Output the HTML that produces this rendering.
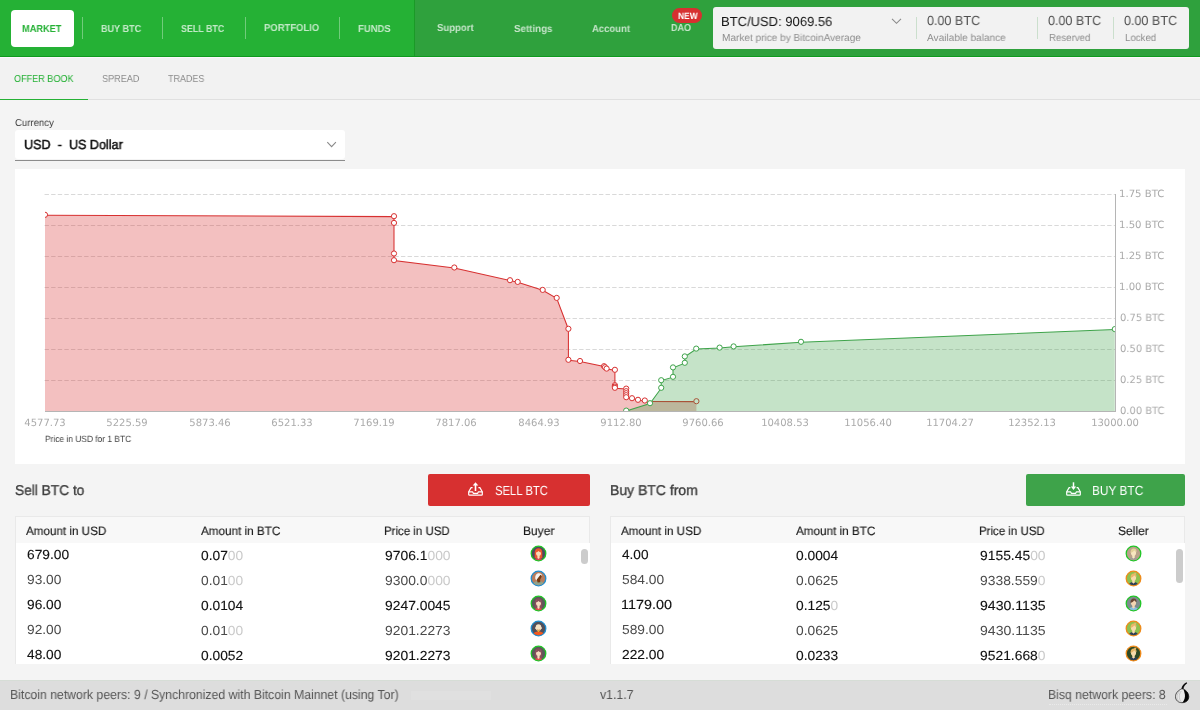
<!DOCTYPE html>
<html lang="en">
<head>
<meta charset="utf-8">
<title>Bisq - Market Offer Book</title>
<style>
*{box-sizing:border-box;margin:0;padding:0}
html,body{width:1200px;height:710px;overflow:hidden}
body{background:#f4f4f4;font-family:"Liberation Sans",sans-serif;position:relative}
.abs,.t,.chart{position:absolute}
.t{white-space:nowrap;line-height:1;z-index:5;transform-origin:0 50%;will-change:transform;text-rendering:geometricPrecision}
.chart{left:0;top:0;z-index:2}
#nav{left:0;top:0;width:1200px;height:57px;background:#2fa13d;border-bottom:1px solid #0f9a1e}
#nav1{left:0;top:0;width:415px;height:56px;background:#25b135;border-right:1px solid #1a9a27}
#navline{left:0;top:57px;width:1200px;height:1px;background:#fcf8fc}
#mk{left:11px;top:10px;width:63px;height:37px;background:#fff;border-radius:4px}
.sep{width:1px;top:17px;height:22px;background:rgba(255,255,255,0.35)}
#badge{left:672px;top:8px;width:30px;height:15px;border-radius:8px;background:#d73030}
#pbox{left:713px;top:7px;width:476px;height:42px;background:#f2f2f2;border-radius:3px}
.psep{width:1px;top:17px;height:22px;background:#cbdfcd}
#tabbar{left:0;top:58px;width:1200px;height:41px;background:#f2f2f2}
#tabline{left:0;top:99px;width:1200px;height:1px;background:#e0e0e0}
#tabsel{left:0;top:99px;width:88px;height:1px;background:#25b135}
#combo{left:15px;top:130px;width:330px;height:29px;background:#fff;border-radius:3px}
#comboline{left:15px;top:160px;width:330px;height:1px;background:#8c8c8c}
#panel{left:15px;top:169px;width:1170px;height:295px;background:#fff}
.btn{top:474px;height:32px;border-radius:2px}
#sell{left:428px;width:162px;background:#d73030}
#buy{left:1026px;width:159px;background:#3ea34a}
.tbl{top:516px;height:148px;border:1px solid #e9e9e9;background:#f8f8f8}
.rows{top:543px;height:121px;background:#fff}
.av,.ic{z-index:6}
.thumb{width:7px;border-radius:3.5px;background:#cccccc;z-index:6}
#foot{left:0;top:680px;width:1200px;height:30px;background:#dddddd}
</style>
</head>
<body>
<div id="nav" class="abs"></div>
<div id="nav1" class="abs"></div>
<div id="navline" class="abs"></div>
<div id="mk" class="abs"></div>
<div class="abs sep" style="left:82px"></div>
<div class="abs sep" style="left:162px"></div>
<div class="abs sep" style="left:245px"></div>
<div class="abs sep" style="left:339px"></div>
<div id="badge" class="abs"></div>
<div id="pbox" class="abs"></div>
<div class="abs psep" style="left:916px"></div>
<div class="abs psep" style="left:1037px"></div>
<div class="abs psep" style="left:1113px"></div>
<svg class="abs" style="left:891px;top:17px;z-index:6" width="12" height="8" viewBox="0 0 12 8"><path d="M1 1.800 L5.500 6.300 L10 1.800" fill="none" stroke="#8a8a8a" stroke-width="1.100"/></svg>
<div id="tabbar" class="abs"></div>
<div id="tabline" class="abs"></div>
<div id="tabsel" class="abs"></div>
<div id="combo" class="abs"></div>
<div id="comboline" class="abs"></div>
<svg class="abs" style="left:326px;top:140px;z-index:6" width="12" height="9" viewBox="0 0 12 9"><path d="M1.300 2.200 L5.600 6.700 L9.900 2.200" fill="none" stroke="#8a8a8a" stroke-width="1.100"/></svg>
<div id="panel" class="abs"></div>
<svg class="chart" width="1200" height="710" viewBox="0 0 1200 710">
<defs><clipPath id="plot"><rect x="45" y="185" width="1070.5" height="227"/></clipPath></defs>
<line x1="44.55" y1="194.5" x2="1115" y2="194.5" stroke="#d9d9d9" stroke-width="1" stroke-dasharray="4.4 2.2"/>
<line x1="44.55" y1="225.5" x2="1115" y2="225.5" stroke="#d9d9d9" stroke-width="1" stroke-dasharray="4.4 2.2"/>
<line x1="44.55" y1="256.5" x2="1115" y2="256.5" stroke="#d9d9d9" stroke-width="1" stroke-dasharray="4.4 2.2"/>
<line x1="44.55" y1="287.5" x2="1115" y2="287.5" stroke="#d9d9d9" stroke-width="1" stroke-dasharray="4.4 2.2"/>
<line x1="44.55" y1="318.5" x2="1115" y2="318.5" stroke="#d9d9d9" stroke-width="1" stroke-dasharray="4.4 2.2"/>
<line x1="44.55" y1="349.5" x2="1115" y2="349.5" stroke="#d9d9d9" stroke-width="1" stroke-dasharray="4.4 2.2"/>
<line x1="44.55" y1="380.5" x2="1115" y2="380.5" stroke="#d9d9d9" stroke-width="1" stroke-dasharray="4.4 2.2"/>
<g clip-path="url(#plot)">
<polygon points="45.0,215.2 394.0,216.6 394.0,223.3 394.0,253.9 394.0,260.6 454.3,267.9 510.0,280.6 517.7,282.3 542.7,290.3 556.7,298.3 568.4,329.2 568.4,360.2 580.0,361.4 604.0,366.6 605.0,367.6 606.6,369.0 614.9,370.2 614.9,385.6 614.9,387.0 614.9,388.2 626.2,389.0 626.2,391.6 626.2,393.6 626.2,395.6 626.2,397.6 632.0,398.6 638.0,400.2 644.8,400.9 650.0,401.5 696.4,401.6 696.4,411.3 45.0,411.3" fill="rgba(215,48,48,0.3)"/>
<polyline points="45.0,215.2 394.0,216.6 394.0,223.3 394.0,253.9 394.0,260.6 454.3,267.9 510.0,280.6 517.7,282.3 542.7,290.3 556.7,298.3 568.4,329.2 568.4,360.2 580.0,361.4 604.0,366.6 605.0,367.6 606.6,369.0 614.9,370.2 614.9,385.6 614.9,387.0 614.9,388.2 626.2,389.0 626.2,391.6 626.2,393.6 626.2,395.6 626.2,397.6 632.0,398.6 638.0,400.2 644.8,400.9 650.0,401.5 696.4,401.6" fill="none" stroke="#d73030" stroke-width="1.05"/>
<g fill="#fff" stroke="#d73030" stroke-width="1">
<circle cx="45.0" cy="214.8" r="2.6"/>
<circle cx="394.0" cy="216.2" r="2.6"/>
<circle cx="394.0" cy="222.9" r="2.6"/>
<circle cx="394.0" cy="253.5" r="2.6"/>
<circle cx="394.0" cy="260.2" r="2.6"/>
<circle cx="454.3" cy="267.5" r="2.6"/>
<circle cx="510.0" cy="280.2" r="2.6"/>
<circle cx="517.7" cy="281.9" r="2.6"/>
<circle cx="542.7" cy="289.9" r="2.6"/>
<circle cx="556.7" cy="297.9" r="2.6"/>
<circle cx="568.4" cy="328.8" r="2.6"/>
<circle cx="568.4" cy="359.8" r="2.6"/>
<circle cx="580.0" cy="361.0" r="2.6"/>
<circle cx="604.0" cy="366.2" r="2.6"/>
<circle cx="605.0" cy="367.2" r="2.6"/>
<circle cx="606.6" cy="368.6" r="2.6"/>
<circle cx="614.9" cy="369.8" r="2.6"/>
<circle cx="614.9" cy="385.2" r="2.6"/>
<circle cx="614.9" cy="386.6" r="2.6"/>
<circle cx="614.9" cy="387.8" r="2.6"/>
<circle cx="626.2" cy="388.6" r="2.6"/>
<circle cx="626.2" cy="391.2" r="2.6"/>
<circle cx="626.2" cy="393.2" r="2.6"/>
<circle cx="626.2" cy="395.2" r="2.6"/>
<circle cx="626.2" cy="397.2" r="2.6"/>
<circle cx="632.0" cy="398.2" r="2.6"/>
<circle cx="638.0" cy="399.8" r="2.6"/>
<circle cx="644.8" cy="400.5" r="2.6"/>
<circle cx="696.4" cy="401.2" r="2.6"/>
</g>
<polygon points="626.2,411.0 650.0,403.6 661.2,388.2 661.2,380.6 673.0,377.2 673.0,367.8 684.8,363.2 684.8,356.8 696.2,349.0 719.6,348.0 733.6,346.8 801.0,342.2 1114.8,329.5 1114.8,411.3 626.2,411.3" fill="rgba(62,163,74,0.3)"/>
<polyline points="626.2,411.0 650.0,403.6 661.2,388.2 661.2,380.6 673.0,377.2 673.0,367.8 684.8,363.2 684.8,356.8 696.2,349.0 719.6,348.0 733.6,346.8 801.0,342.2 1114.8,329.5" fill="none" stroke="#3ea34a" stroke-width="1.05"/>
<g fill="#fff" stroke="#3ea34a" stroke-width="1">
<circle cx="626.2" cy="410.6" r="2.6"/>
<circle cx="650.0" cy="403.2" r="2.6"/>
<circle cx="661.2" cy="387.8" r="2.6"/>
<circle cx="661.2" cy="380.2" r="2.6"/>
<circle cx="673.0" cy="376.8" r="2.6"/>
<circle cx="673.0" cy="367.4" r="2.6"/>
<circle cx="684.8" cy="362.8" r="2.6"/>
<circle cx="684.8" cy="356.4" r="2.6"/>
<circle cx="696.2" cy="348.6" r="2.6"/>
<circle cx="719.6" cy="347.6" r="2.6"/>
<circle cx="733.6" cy="346.4" r="2.6"/>
<circle cx="801.0" cy="341.8" r="2.6"/>
<circle cx="1114.8" cy="329.1" r="2.6"/>
</g></g>
<line x1="45" y1="411.5" x2="1116" y2="411.5" stroke="#b5b5b5" stroke-width="1"/>
<line x1="1115.5" y1="194" x2="1115.5" y2="412" stroke="#b5b5b5" stroke-width="1"/>
</svg>
<div id="sell" class="abs btn"></div>
<div id="buy" class="abs btn"></div>
<div class="abs tbl" style="left:15px;width:575px"></div>
<div class="abs rows" style="left:16px;width:574px"></div>
<div class="abs tbl" style="left:610px;width:575px"></div>
<div class="abs rows" style="left:611px;width:574px"></div>
<div class="abs thumb" style="left:581px;top:549px;height:15px;width:7px"></div>
<div class="abs thumb" style="left:1176px;top:549px;height:34px;width:7px"></div>
<div id="foot" class="abs"></div>
<svg class="abs av" style="left:530.4px;top:545.4px" width="17" height="17" viewBox="-0.5 -0.5 17 17"><defs><clipPath id="c538_553"><circle cx="8" cy="8" r="6.8"/></clipPath></defs><circle cx="8" cy="8" r="7.3" fill="#4e4960" stroke="#20c626" stroke-width="1.3"/><g clip-path="url(#c538_553)"><path d="M4.200 12.600V7.100C4.200 4.100 5.700 2.700 8 2.700s3.800 1.400 3.800 4.400v5.500z" fill="#ea552c"/><path d="M3.700 16c0-2.400 1.500-3.800 4.300-3.800s4.300 1.400 4.300 3.800z" fill="#d9464f"/><path d="M6.900 9.800h2.200v2.700L8 13.500l-1.100-1z" fill="#f8dcb8"/><ellipse cx="8" cy="7.500" rx="2.500" ry="3" fill="#f8dcb8"/><path d="M5.400 6.900C5.500 4.600 6.600 3.700 8 3.700s2.500.9 2.600 3.200C9.600 6.700 8.700 6.100 8 5.400 7.300 6.100 6.400 6.700 5.400 6.900z" fill="#ea552c"/></g></svg>
<svg class="abs av" style="left:530.4px;top:570.4px" width="17" height="17" viewBox="-0.5 -0.5 17 17"><defs><clipPath id="c538_578"><circle cx="8" cy="8" r="6.8"/></clipPath></defs><circle cx="8" cy="8" r="7.3" fill="#b87d5d" stroke="#1d8dd0" stroke-width="1.3"/><g clip-path="url(#c538_578)"><path d="M2 16c0-3.600 2.100-5.400 6-5.400s6 1.800 6 5.400z" fill="#90a28c"/><path d="M4.900 8.800C4.200 5 5.800 2.700 8.400 2.700c2.200 0 3.300 1.300 3 2.900L7 10.300z" fill="#f6f3f0"/><path d="M6.300 9L10 4.300l1.500 1.300-1.900 3.600.2 2.600-2.700.2z" fill="#74390f"/></g></svg>
<svg class="abs av" style="left:530.4px;top:595.4px" width="17" height="17" viewBox="-0.5 -0.5 17 17"><defs><clipPath id="c538_603"><circle cx="8" cy="8" r="6.8"/></clipPath></defs><circle cx="8" cy="8" r="7.3" fill="#5a595b" stroke="#20c626" stroke-width="1.3"/><g clip-path="url(#c538_603)"><path d="M4.200 12.600V7.100C4.200 4.100 5.700 2.700 8 2.700s3.800 1.400 3.800 4.400v5.500z" fill="#87505a"/><path d="M3.700 16c0-2.400 1.500-3.800 4.300-3.800s4.300 1.400 4.300 3.800z" fill="#e44b4b"/><path d="M6.900 9.800h2.200v2.700L8 13.500l-1.100-1z" fill="#f6dcc0"/><ellipse cx="8" cy="7.500" rx="2.500" ry="3" fill="#f6dcc0"/><path d="M5.400 6.900C5.500 4.600 6.600 3.700 8 3.700s2.500.9 2.600 3.200C9.600 6.700 8.700 6.100 8 5.400 7.300 6.100 6.400 6.700 5.400 6.900z" fill="#87505a"/></g></svg>
<svg class="abs av" style="left:530.4px;top:620.4px" width="17" height="17" viewBox="-0.5 -0.5 17 17"><defs><clipPath id="c538_628"><circle cx="8" cy="8" r="6.8"/></clipPath></defs><circle cx="8" cy="8" r="7.3" fill="#524f5a" stroke="#1d8dd0" stroke-width="1.3"/><g clip-path="url(#c538_628)"><path d="M2.400 16c0-3.300 1.900-4.900 5.600-4.900s5.600 1.600 5.600 4.900z" fill="#f4581f"/><ellipse cx="8" cy="7" rx="2.800" ry="3.300" fill="#f6e2c4"/><circle cx="5.300" cy="7.600" r=".8" fill="#f6e2c4"/><circle cx="10.700" cy="7.600" r=".8" fill="#f6e2c4"/><path d="M6.200 8.600c.3 1.900 1 2.800 1.800 2.800s1.500-.9 1.800-2.800c-.6.500-1.200.7-1.800.7s-1.200-.2-1.800-.7z" fill="#d9a05a"/><circle cx="8" cy="10.600" r=".7" fill="#f2c21a"/></g></svg>
<svg class="abs av" style="left:530.4px;top:645.4px" width="17" height="17" viewBox="-0.5 -0.5 17 17"><defs><clipPath id="c538_653"><circle cx="8" cy="8" r="6.8"/></clipPath></defs><circle cx="8" cy="8" r="7.3" fill="#5a595b" stroke="#20c626" stroke-width="1.3"/><g clip-path="url(#c538_653)"><path d="M4.200 12.600V7.100C4.200 4.100 5.700 2.700 8 2.700s3.800 1.400 3.800 4.400v5.500z" fill="#87505a"/><path d="M3.700 16c0-2.400 1.500-3.800 4.300-3.800s4.300 1.400 4.300 3.800z" fill="#e44b4b"/><path d="M6.900 9.800h2.200v2.700L8 13.500l-1.100-1z" fill="#f6dcc0"/><ellipse cx="8" cy="7.500" rx="2.500" ry="3" fill="#f6dcc0"/><path d="M5.400 6.900C5.500 4.600 6.600 3.700 8 3.700s2.500.9 2.600 3.200C9.600 6.700 8.700 6.100 8 5.400 7.300 6.100 6.400 6.700 5.400 6.900z" fill="#87505a"/></g></svg>
<svg class="abs av" style="left:1125.3px;top:545.4px" width="17" height="17" viewBox="-0.5 -0.5 17 17"><defs><clipPath id="c1133_553"><circle cx="8" cy="8" r="6.800"/></clipPath></defs><circle cx="8" cy="8" r="7.300" fill="#b9a18a" stroke="#20c626" stroke-width="1.300"/><g clip-path="url(#c1133_553)"><path d="M3.100 16c0-3 1.700-4.600 4.900-4.600s4.900 1.600 4.900 4.600z" fill="#a59d95"/><path d="M6.800 9.500h2.400v2.300L8 13.300 6.800 11.800z" fill="#f8e6c0"/><ellipse cx="8" cy="7.300" rx="2.600" ry="3.100" fill="#f8e6c0"/><path d="M5.100 7.400C4.800 4.400 6.100 2.900 8.200 2.900c2.100 0 3.100 1.500 2.800 3.900C10 6.300 9.100 5.600 8.700 4.800 7.900 6.100 6.600 7 5.100 7.400z" fill="#e4d29a"/></g></svg>
<svg class="abs av" style="left:1125.3px;top:570.4px" width="17" height="17" viewBox="-0.5 -0.5 17 17"><defs><clipPath id="c1133_578"><circle cx="8" cy="8" r="6.800"/></clipPath></defs><circle cx="8" cy="8" r="7.300" fill="#8dc150" stroke="#f08a1a" stroke-width="1.300"/><g clip-path="url(#c1133_578)"><path d="M3.100 16c0-3 1.700-4.600 4.900-4.600s4.900 1.600 4.900 4.600z" fill="#2e3f57"/><path d="M6.800 9.500h2.400v2.300L8 13.300 6.800 11.800z" fill="#f7dbab"/><ellipse cx="8" cy="7.300" rx="2.600" ry="3.100" fill="#f7dbab"/><path d="M5.100 7.400C4.800 4.400 6.100 2.900 8.200 2.900c2.100 0 3.100 1.500 2.800 3.900C10 6.300 9.100 5.600 8.700 4.800 7.900 6.100 6.600 7 5.100 7.400z" fill="#e7b768"/><circle cx="9.700" cy="3" r="1.100" fill="#e7b768"/></g></svg>
<svg class="abs av" style="left:1125.3px;top:595.4px" width="17" height="17" viewBox="-0.5 -0.5 17 17"><defs><clipPath id="c1133_603"><circle cx="8" cy="8" r="6.800"/></clipPath></defs><circle cx="8" cy="8" r="7.300" fill="#7e8b8d" stroke="#20c626" stroke-width="1.300"/><g clip-path="url(#c1133_603)"><path d="M3.100 16c0-3 1.700-4.600 4.900-4.600s4.900 1.600 4.900 4.600z" fill="#87c0e1"/><path d="M6.800 9.500h2.400v2.300L8 13.300 6.800 11.800z" fill="#f4d5b2"/><ellipse cx="8" cy="7.300" rx="2.600" ry="3.100" fill="#f4d5b2"/><path d="M5.100 7.400C4.800 4.400 6.100 2.900 8.200 2.900c2.100 0 3.100 1.500 2.800 3.900C10 6.300 9.100 5.600 8.700 4.800 7.900 6.100 6.600 7 5.100 7.400z" fill="#6b4634"/></g></svg>
<svg class="abs av" style="left:1125.3px;top:620.4px" width="17" height="17" viewBox="-0.5 -0.5 17 17"><defs><clipPath id="c1133_628"><circle cx="8" cy="8" r="6.800"/></clipPath></defs><circle cx="8" cy="8" r="7.300" fill="#8dc150" stroke="#f08a1a" stroke-width="1.300"/><g clip-path="url(#c1133_628)"><path d="M3.100 16c0-3 1.700-4.600 4.900-4.600s4.900 1.600 4.900 4.600z" fill="#2e3f57"/><path d="M6.800 9.500h2.400v2.300L8 13.300 6.800 11.800z" fill="#f7dbab"/><ellipse cx="8" cy="7.300" rx="2.600" ry="3.100" fill="#f7dbab"/><path d="M5.100 7.400C4.800 4.400 6.100 2.900 8.200 2.900c2.100 0 3.100 1.500 2.800 3.900C10 6.300 9.100 5.600 8.700 4.800 7.900 6.100 6.600 7 5.100 7.400z" fill="#e7b768"/><circle cx="9.700" cy="3" r="1.100" fill="#e7b768"/></g></svg>
<svg class="abs av" style="left:1125.3px;top:645.4px" width="17" height="17" viewBox="-0.5 -0.5 17 17"><defs><clipPath id="c1133_653"><circle cx="8" cy="8" r="6.800"/></clipPath></defs><circle cx="8" cy="8" r="7.300" fill="#2f4a25" stroke="#f08a1a" stroke-width="1.300"/><g clip-path="url(#c1133_653)"><path d="M3.100 16c0-3 1.700-4.600 4.900-4.600s4.900 1.600 4.900 4.600z" fill="#2e3f57"/><path d="M6.800 9.500h2.400v2.300L8 13.300 6.800 11.800z" fill="#f7dbab"/><ellipse cx="8" cy="7.300" rx="2.600" ry="3.100" fill="#f7dbab"/><path d="M5.100 7.400C4.800 4.400 6.100 2.900 8.200 2.900c2.100 0 3.100 1.500 2.800 3.900C10 6.300 9.100 5.600 8.700 4.800 7.900 6.100 6.600 7 5.100 7.400z" fill="#e7b768"/><circle cx="9.700" cy="3" r="1.100" fill="#e7b768"/></g></svg>
<svg class="abs ic" style="left:468px;top:482px" width="15" height="14" viewBox="0 0 15 14"><g fill="none" stroke="#fff" stroke-width="1.200" stroke-linejoin="round"><path d="M4.600 5.600H3.100L.7 9.800V12.400Q.7 13.200 1.500 13.200H13.500Q14.300 13.200 14.300 12.400V9.800L11.900 5.600H10.400"/><path d="M.7 9.900H4.700L5.300 11.300H9.700L10.300 9.900H14.300"/><path d="M7.500 9V2" stroke-width="1.600"/></g><path d="M7.500 .2L10.300 3.600H4.700z" fill="#fff"/></svg>
<svg class="abs ic" style="left:1066px;top:482px" width="15" height="14" viewBox="0 0 15 14"><g fill="none" stroke="#fff" stroke-width="1.200" stroke-linejoin="round"><path d="M4.400 5.600H3.100L.7 9.800V12.400Q.7 13.200 1.500 13.200H13.500Q14.300 13.200 14.300 12.400V9.800L11.900 5.600H10.600"/><path d="M.7 9.900H4.700L5.300 11.300H9.700L10.300 9.900H14.300"/><path d="M7.500 .3V6" stroke-width="1.500"/></g><path d="M7.500 8L4.900 4.600H10.100z" fill="#fff"/></svg>
<svg class="abs ic" style="left:1168px;top:678px" width="30" height="30" viewBox="0 0 30 30"><path d="M13.500 10.900C10.200 12.500 7.500 15 7.500 18.600c0 3.700 2.800 6.100 6.500 6.100 4.300 0 6.800-2.500 6.800-6.100 0-3.600-2.500-6.100-5.500-7.700z" fill="#e9e9e9" stroke="#2a2a2a" stroke-width=".8"/><path d="M11.800 13.400C9.800 15 8.900 16.800 9 19c.1 1.900 1.100 3.400 2.600 4.500M13.300 13C11.700 15 11.100 17 11.300 19.200c.2 1.900.9 3.500 2 4.900" fill="none" stroke="#b9b9b9" stroke-width=".7"/><path d="M15.300 10.900c3 1.600 5.500 4.100 5.500 7.700 0 3.600-2.500 6.100-6.500 6.100 2.200-2.600 3-5.400 2.600-8.200-.3-2.100-1-4-1.600-5.600z" fill="#050505"/><path d="M13.400 10.700C13.900 8 15.600 5.800 18.500 4.200l.7 1.100C17 6.800 15.800 8.600 15.400 11z" fill="#0a0a0a"/></svg>
<div class="abs" style="left:1049px;top:703.500px;width:118px;height:0;border-top:1px dotted #eaeaea"></div>
<div class="abs" style="left:411px;top:690.5px;width:79.5px;height:9.5px;background:#e0e0e0"></div>
<div class="abs" style="left:0;top:680px;width:1200px;height:1px;background:#d6ddd6"></div>
<span class="t" id="t0" style='top:25.00px;font-size:10.14px;left:22.25px;transform:scaleX(0.9122);font-weight:700;color:#25b135;'>MARKET</span>
<span class="t" id="t1" style='top:25.00px;font-size:10.14px;left:101.25px;transform:scaleX(0.8974);font-weight:700;color:rgba(255,255,255,0.72);'>BUY BTC</span>
<span class="t" id="t2" style='top:25.00px;font-size:10.14px;left:181.25px;transform:scaleX(0.8767);font-weight:700;color:rgba(255,255,255,0.72);'>SELL BTC</span>
<span class="t" id="t3" style='top:24.00px;font-size:10.14px;left:264.25px;transform:scaleX(0.9335);font-weight:700;color:rgba(255,255,255,0.72);'>PORTFOLIO</span>
<span class="t" id="t4" style='top:25.00px;font-size:10.14px;left:358.25px;transform:scaleX(0.9396);font-weight:700;color:rgba(255,255,255,0.72);'>FUNDS</span>
<span class="t" id="t5" style='top:24.00px;font-size:10.14px;left:437.25px;transform:scaleX(0.9447);font-weight:700;color:rgba(255,255,255,0.72);'>Support</span>
<span class="t" id="t6" style='top:25.00px;font-size:10.14px;left:514.25px;transform:scaleX(0.9613);font-weight:700;color:rgba(255,255,255,0.72);'>Settings</span>
<span class="t" id="t7" style='top:25.00px;font-size:10.14px;left:592.00px;transform:scaleX(0.9361);font-weight:700;color:rgba(255,255,255,0.72);'>Account</span>
<span class="t" id="t8" style='top:24.00px;font-size:10.14px;left:670.50px;transform:scaleX(0.8951);font-weight:700;color:rgba(255,255,255,0.72);'>DAO</span>
<span class="t" id="t9" style='top:12.00px;font-size:9.13px;left:677.50px;transform:scaleX(0.9227);font-weight:700;color:#fff;'>NEW</span>
<span class="t" id="t10" style='top:15.00px;font-size:13.19px;left:721.01px;transform:scaleX(0.9861);color:#111;'>BTC/USD: 9069.56</span>
<span class="t" id="t11" style='top:34.00px;font-size:10.14px;left:722.00px;transform:scaleX(0.9925);color:#8e8e8e;'>Market price by BitcoinAverage</span>
<span class="t" id="t12" style='top:14.00px;font-size:13.19px;left:927.00px;transform:scaleX(0.9523);color:#4f4f4f;'>0.00 BTC</span>
<span class="t" id="t13" style='top:34.00px;font-size:10.14px;left:926.90px;transform:scaleX(0.9943);color:#8e8e8e;'>Available balance</span>
<span class="t" id="t14" style='top:14.00px;font-size:13.19px;left:1048.00px;transform:scaleX(0.9523);color:#4f4f4f;'>0.00 BTC</span>
<span class="t" id="t15" style='top:34.00px;font-size:10.14px;left:1048.50px;transform:scaleX(0.9543);color:#8e8e8e;'>Reserved</span>
<span class="t" id="t16" style='top:14.00px;font-size:13.19px;left:1124.00px;transform:scaleX(0.9523);color:#4f4f4f;'>0.00 BTC</span>
<span class="t" id="t17" style='top:34.00px;font-size:10.14px;left:1124.50px;transform:scaleX(0.9526);color:#8e8e8e;'>Locked</span>
<span class="t" id="t18" style='top:75.00px;font-size:10.14px;left:14.10px;transform:scaleX(0.8960);color:#25b135;'>OFFER BOOK</span>
<span class="t" id="t19" style='top:75.00px;font-size:10.14px;left:102.30px;transform:scaleX(0.9002);color:#8d8d8d;'>SPREAD</span>
<span class="t" id="t20" style='top:75.00px;font-size:10.14px;left:168.00px;transform:scaleX(0.8859);color:#8d8d8d;'>TRADES</span>
<span class="t" id="t21" style='top:119.00px;font-size:10.14px;left:15.30px;transform:scaleX(0.9450);color:#3c3c3c;'>Currency</span>
<span class="t" id="t22" style='top:138.00px;font-size:13.19px;left:23.64px;transform:scaleX(0.9560);color:#111;-webkit-text-stroke:0.5px #111;'>USD&nbsp; - &nbsp;US Dollar</span>
<span class="t" id="t23" style='top:419.00px;font-size:10px;left:45.00px;transform:translateX(-50%);color:#ababab;font-family:"DejaVu Sans", sans-serif;'>4577.73</span>
<span class="t" id="t24" style='top:419.00px;font-size:10px;left:127.27px;transform:translateX(-50%);color:#ababab;font-family:"DejaVu Sans", sans-serif;'>5225.59</span>
<span class="t" id="t25" style='top:419.00px;font-size:10px;left:209.54px;transform:translateX(-50%);color:#ababab;font-family:"DejaVu Sans", sans-serif;'>5873.46</span>
<span class="t" id="t26" style='top:419.00px;font-size:10px;left:291.81px;transform:translateX(-50%);color:#ababab;font-family:"DejaVu Sans", sans-serif;'>6521.33</span>
<span class="t" id="t27" style='top:419.00px;font-size:10px;left:374.08px;transform:translateX(-50%);color:#ababab;font-family:"DejaVu Sans", sans-serif;'>7169.19</span>
<span class="t" id="t28" style='top:419.00px;font-size:10px;left:456.35px;transform:translateX(-50%);color:#ababab;font-family:"DejaVu Sans", sans-serif;'>7817.06</span>
<span class="t" id="t29" style='top:419.00px;font-size:10px;left:538.62px;transform:translateX(-50%);color:#ababab;font-family:"DejaVu Sans", sans-serif;'>8464.93</span>
<span class="t" id="t30" style='top:419.00px;font-size:10px;left:620.88px;transform:translateX(-50%);color:#ababab;font-family:"DejaVu Sans", sans-serif;'>9112.80</span>
<span class="t" id="t31" style='top:419.00px;font-size:10px;left:703.15px;transform:translateX(-50%);color:#ababab;font-family:"DejaVu Sans", sans-serif;'>9760.66</span>
<span class="t" id="t32" style='top:419.00px;font-size:10px;left:785.42px;transform:translateX(-50%);color:#ababab;font-family:"DejaVu Sans", sans-serif;'>10408.53</span>
<span class="t" id="t33" style='top:419.00px;font-size:10px;left:867.69px;transform:translateX(-50%);color:#ababab;font-family:"DejaVu Sans", sans-serif;'>11056.40</span>
<span class="t" id="t34" style='top:419.00px;font-size:10px;left:949.96px;transform:translateX(-50%);color:#ababab;font-family:"DejaVu Sans", sans-serif;'>11704.27</span>
<span class="t" id="t35" style='top:419.00px;font-size:10px;left:1032.23px;transform:translateX(-50%);color:#ababab;font-family:"DejaVu Sans", sans-serif;'>12352.13</span>
<span class="t" id="t36" style='top:419.00px;font-size:10px;left:1114.50px;transform:translateX(-50%);color:#ababab;font-family:"DejaVu Sans", sans-serif;'>13000.00</span>
<span class="t" id="t37" style='top:190.00px;font-size:10px;left:1119.39px;transform:scaleX(1.0131);color:#ababab;font-family:"DejaVu Sans", sans-serif;'>1.75 BTC</span>
<span class="t" id="t38" style='top:221.00px;font-size:10px;left:1119.39px;transform:scaleX(1.0131);color:#ababab;font-family:"DejaVu Sans", sans-serif;'>1.50 BTC</span>
<span class="t" id="t39" style='top:252.00px;font-size:10px;left:1119.39px;transform:scaleX(1.0131);color:#ababab;font-family:"DejaVu Sans", sans-serif;'>1.25 BTC</span>
<span class="t" id="t40" style='top:283.00px;font-size:10px;left:1119.39px;transform:scaleX(1.0131);color:#ababab;font-family:"DejaVu Sans", sans-serif;'>1.00 BTC</span>
<span class="t" id="t41" style='top:314.00px;font-size:10px;left:1120.40px;transform:scaleX(0.9905);color:#ababab;font-family:"DejaVu Sans", sans-serif;'>0.75 BTC</span>
<span class="t" id="t42" style='top:345.00px;font-size:10px;left:1120.40px;transform:scaleX(0.9905);color:#ababab;font-family:"DejaVu Sans", sans-serif;'>0.50 BTC</span>
<span class="t" id="t43" style='top:376.00px;font-size:10px;left:1120.40px;transform:scaleX(0.9905);color:#ababab;font-family:"DejaVu Sans", sans-serif;'>0.25 BTC</span>
<span class="t" id="t44" style='top:407.00px;font-size:10px;left:1120.40px;transform:scaleX(0.9905);color:#ababab;font-family:"DejaVu Sans", sans-serif;'>0.00 BTC</span>
<span class="t" id="t45" style='top:435.00px;font-size:9.13px;left:45.25px;transform:scaleX(0.9181);color:#3c3c3c;'>Price in USD for 1 BTC</span>
<span class="t" id="t46" style='top:484.00px;font-size:14.2px;left:14.80px;transform:scaleX(0.9665);color:#3c3c3c;-webkit-text-stroke:0.35px #3c3c3c;'>Sell BTC to</span>
<span class="t" id="t47" style='top:484.00px;font-size:14.2px;left:609.51px;transform:scaleX(0.9855);color:#3c3c3c;-webkit-text-stroke:0.35px #3c3c3c;'>Buy BTC from</span>
<span class="t" id="t48" style='top:484.00px;font-size:13.19px;left:494.75px;transform:scaleX(0.8562);color:#fff;'>SELL BTC</span>
<span class="t" id="t49" style='top:484.00px;font-size:13.19px;left:1091.60px;transform:scaleX(0.9006);color:#fff;'>BUY BTC</span>
<span class="t" id="t50" style='top:525.00px;font-size:12.17px;left:26.25px;transform:scaleX(0.9584);color:#1a1a1a;-webkit-text-stroke:0.15px #1a1a1a;'>Amount in USD</span>
<span class="t" id="t51" style='top:525.00px;font-size:12.17px;left:200.50px;transform:scaleX(0.9620);color:#1a1a1a;-webkit-text-stroke:0.15px #1a1a1a;'>Amount in BTC</span>
<span class="t" id="t52" style='top:525.00px;font-size:12.17px;left:383.56px;transform:scaleX(0.9448);color:#1a1a1a;-webkit-text-stroke:0.15px #1a1a1a;'>Price in USD</span>
<span class="t" id="t53" style='top:525.00px;font-size:12.17px;left:621.25px;transform:scaleX(0.9584);color:#1a1a1a;-webkit-text-stroke:0.15px #1a1a1a;'>Amount in USD</span>
<span class="t" id="t54" style='top:525.00px;font-size:12.17px;left:795.50px;transform:scaleX(0.9620);color:#1a1a1a;-webkit-text-stroke:0.15px #1a1a1a;'>Amount in BTC</span>
<span class="t" id="t55" style='top:525.00px;font-size:12.17px;left:978.56px;transform:scaleX(0.9448);color:#1a1a1a;-webkit-text-stroke:0.15px #1a1a1a;'>Price in USD</span>
<span class="t" id="t56" style='top:525.00px;font-size:12.17px;left:523.21px;transform:scaleX(0.9867);color:#1a1a1a;-webkit-text-stroke:0.15px #1a1a1a;'>Buyer</span>
<span class="t" id="t57" style='top:525.00px;font-size:12.17px;left:1118.25px;transform:scaleX(0.9909);color:#1a1a1a;-webkit-text-stroke:0.15px #1a1a1a;'>Seller</span>
<span class="t" id="t58" style='top:548.00px;font-size:13.19px;left:26.70px;transform:scaleX(1.0449);color:#111;-webkit-text-stroke:0.12px #111;'>679.00</span>
<span class="t" id="t59" style='top:549.00px;font-size:13.19px;left:201.20px;transform:scaleX(1.0449);color:#111;-webkit-text-stroke:0.12px #111;'>0.07<span style="color:#cacaca;-webkit-text-stroke:0">00</span></span>
<span class="t" id="t60" style='top:549.00px;font-size:13.19px;left:384.60px;transform:scaleX(1.0515);color:#111;-webkit-text-stroke:0.12px #111;'>9706.1<span style="color:#cacaca;-webkit-text-stroke:0">000</span></span>
<span class="t" id="t61" style='top:573.00px;font-size:13.19px;left:26.70px;transform:scaleX(1.0407);color:#4a4a4a;'>93.00</span>
<span class="t" id="t62" style='top:574.00px;font-size:13.19px;left:201.20px;transform:scaleX(1.0449);color:#4a4a4a;'>0.01<span style="color:#cacaca;-webkit-text-stroke:0">00</span></span>
<span class="t" id="t63" style='top:574.00px;font-size:13.19px;left:384.60px;transform:scaleX(1.0515);color:#4a4a4a;'>9300.0<span style="color:#cacaca;-webkit-text-stroke:0">000</span></span>
<span class="t" id="t64" style='top:598.00px;font-size:13.19px;left:26.70px;transform:scaleX(1.0407);color:#111;-webkit-text-stroke:0.12px #111;'>96.00</span>
<span class="t" id="t65" style='top:599.00px;font-size:13.19px;left:201.20px;transform:scaleX(1.0449);color:#111;-webkit-text-stroke:0.12px #111;'>0.0104</span>
<span class="t" id="t66" style='top:599.00px;font-size:13.19px;left:384.60px;transform:scaleX(1.0515);color:#111;-webkit-text-stroke:0.12px #111;'>9247.0045</span>
<span class="t" id="t67" style='top:623.00px;font-size:13.19px;left:26.70px;transform:scaleX(1.0407);color:#4a4a4a;'>92.00</span>
<span class="t" id="t68" style='top:624.00px;font-size:13.19px;left:201.20px;transform:scaleX(1.0449);color:#4a4a4a;'>0.01<span style="color:#cacaca;-webkit-text-stroke:0">00</span></span>
<span class="t" id="t69" style='top:624.00px;font-size:13.19px;left:384.60px;transform:scaleX(1.0515);color:#4a4a4a;'>9201.2273</span>
<span class="t" id="t70" style='top:648.00px;font-size:13.19px;left:26.70px;transform:scaleX(1.0407);color:#111;-webkit-text-stroke:0.12px #111;'>48.00</span>
<span class="t" id="t71" style='top:649.00px;font-size:13.19px;left:201.20px;transform:scaleX(1.0449);color:#111;-webkit-text-stroke:0.12px #111;'>0.0052</span>
<span class="t" id="t72" style='top:649.00px;font-size:13.19px;left:384.60px;transform:scaleX(1.0515);color:#111;-webkit-text-stroke:0.12px #111;'>9201.2273</span>
<span class="t" id="t73" style='top:548.00px;font-size:13.19px;left:621.70px;transform:scaleX(1.0341);color:#111;-webkit-text-stroke:0.12px #111;'>4.00</span>
<span class="t" id="t74" style='top:549.00px;font-size:13.19px;left:796.20px;transform:scaleX(1.0449);color:#111;-webkit-text-stroke:0.12px #111;'>0.0004</span>
<span class="t" id="t75" style='top:549.00px;font-size:13.19px;left:979.60px;transform:scaleX(1.0515);color:#111;-webkit-text-stroke:0.12px #111;'>9155.45<span style="color:#cacaca;-webkit-text-stroke:0">00</span></span>
<span class="t" id="t76" style='top:573.00px;font-size:13.19px;left:621.70px;transform:scaleX(1.0449);color:#4a4a4a;'>584.00</span>
<span class="t" id="t77" style='top:574.00px;font-size:13.19px;left:796.20px;transform:scaleX(1.0449);color:#4a4a4a;'>0.0625</span>
<span class="t" id="t78" style='top:574.00px;font-size:13.19px;left:979.60px;transform:scaleX(1.0515);color:#4a4a4a;'>9338.559<span style="color:#cacaca;-webkit-text-stroke:0">0</span></span>
<span class="t" id="t79" style='top:598.00px;font-size:13.19px;left:620.61px;transform:scaleX(1.0935);color:#111;-webkit-text-stroke:0.12px #111;'>1179.00</span>
<span class="t" id="t80" style='top:599.00px;font-size:13.19px;left:796.20px;transform:scaleX(1.0449);color:#111;-webkit-text-stroke:0.12px #111;'>0.125<span style="color:#cacaca;-webkit-text-stroke:0">0</span></span>
<span class="t" id="t81" style='top:599.00px;font-size:13.19px;left:979.60px;transform:scaleX(1.0683);color:#111;-webkit-text-stroke:0.12px #111;'>9430.1135</span>
<span class="t" id="t82" style='top:623.00px;font-size:13.19px;left:621.70px;transform:scaleX(1.0449);color:#4a4a4a;'>589.00</span>
<span class="t" id="t83" style='top:624.00px;font-size:13.19px;left:796.20px;transform:scaleX(1.0449);color:#4a4a4a;'>0.0625</span>
<span class="t" id="t84" style='top:624.00px;font-size:13.19px;left:979.60px;transform:scaleX(1.0683);color:#4a4a4a;'>9430.1135</span>
<span class="t" id="t85" style='top:648.00px;font-size:13.19px;left:621.70px;transform:scaleX(1.0449);color:#111;-webkit-text-stroke:0.12px #111;'>222.00</span>
<span class="t" id="t86" style='top:649.00px;font-size:13.19px;left:796.20px;transform:scaleX(1.0449);color:#111;-webkit-text-stroke:0.12px #111;'>0.0233</span>
<span class="t" id="t87" style='top:649.00px;font-size:13.19px;left:979.60px;transform:scaleX(1.0515);color:#111;-webkit-text-stroke:0.12px #111;'>9521.668<span style="color:#cacaca;-webkit-text-stroke:0">0</span></span>
<span class="t" id="t88" style='top:688.00px;font-size:13.19px;left:9.57px;transform:scaleX(0.9290);color:#555;'>Bitcoin network peers: 9 / Synchronized with Bitcoin Mainnet (using Tor)</span>
<span class="t" id="t89" style='top:688.00px;font-size:13.19px;left:600.25px;transform:scaleX(0.9342);color:#555;'>v1.1.7</span>
<span class="t" id="t90" style='top:688.00px;font-size:13.19px;left:1048.37px;transform:scaleX(0.9277);color:#555;'>Bisq network peers: 8</span>
</body>
</html>
